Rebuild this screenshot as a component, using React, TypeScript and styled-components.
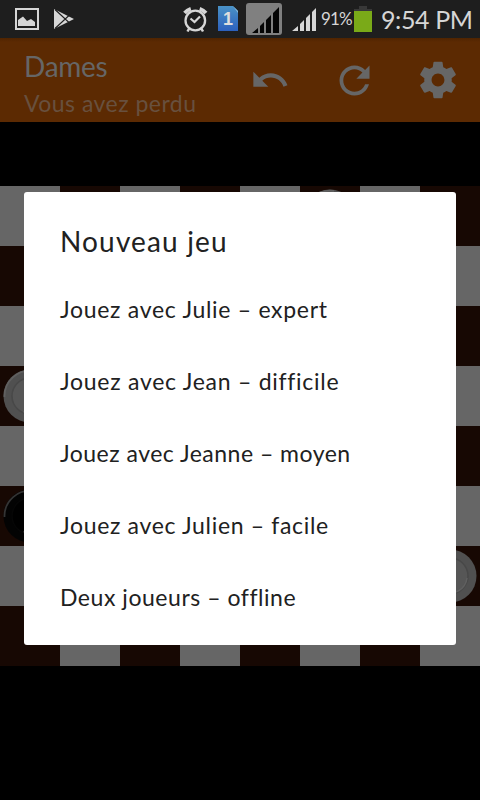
import React from "react";
import styled, { createGlobalStyle } from "styled-components";

const GlobalStyle = createGlobalStyle`
  * { box-sizing: border-box; }
  body { margin: 0; background: #000; font-family: Lato, "Open Sans", sans-serif; }
  h1, h2, p, ul { margin: 0; padding: 0; font-weight: 400; }
`;

const Screen = styled.div`
  position: relative;
  width: 480px;
  height: 800px;
  overflow: hidden;
  display: flex;
  flex-direction: column;
  background: #000;
`;

const StatusBar = styled.header`
  height: 38px;
  flex: none;
  display: flex;
  background: #1e1e1e;
  color: #d6d6d6;
  svg { display: block; flex: none; }
`;

const Spacer = styled.div`flex: 1;`;

const Label = styled.span<{ $size: number; $track: number; $width: number; $line: number }>`
  display: block;
  flex: none;
  white-space: nowrap;
  width: ${(p) => p.$width}px;
  font-size: ${(p) => p.$size}px;
  line-height: ${(p) => p.$line}px;
  letter-spacing: ${(p) => p.$track}px;
`;

const Clock = styled(Label)`
  padding-left: 4px;
`;

const AppBar = styled.div`
  height: 84px;
  flex: none;
  display: flex;
  background: linear-gradient(#4f2400, #5c2a02 4px);
  color: #666;
`;

const Titles = styled.div`
  width: 250px;
  flex: none;
  padding: 10px 0 0 24px;
`;

const Subtitle = styled.div`
  color: #68503e;
  padding-top: 2px;
`;

const Actions = styled.div`
  display: grid;
  grid-template-columns: 81.5px 84.5px 44px;
  align-items: center;
  svg { display: block; fill: #666; }
`;

const Board = styled.div`
  margin-top: 64px;
  flex: none;
  display: grid;
  grid-template-columns: repeat(8, 60px);
  grid-auto-rows: 60px;
`;

const Square = styled.div<{ $dark: boolean }>`
  background: ${(p) => (p.$dark ? "#170803" : "#666")};
  padding: 3px;
`;

const Dialog = styled.section`
  position: absolute;
  left: 24px;
  top: 192px;
  width: 432px;
  height: 453px;
  padding: 29px 36px 0;
  background: #fff;
  border-radius: 3px;
  color: #212121;
`;

const Options = styled.ul`
  list-style: none;
  padding-top: 12px;
`;

const Option = styled.li`
  height: 72px;
  display: flex;
  align-items: center;
`;

const Piece = ({ black = false }: { black?: boolean }) => (
  <svg width="54" height="54" viewBox="0 0 54 54">
    <circle cx="27" cy="27" r="26.5" fill={black ? "#030303" : "#505050"} />
    <path d="M1.5 28A25.5 25.5 0 0 1 31 2" fill="none" stroke={black ? "#343434" : "#606060"} strokeWidth="1.8" />
    <circle cx="27" cy="27" r="18" fill={black ? "#000" : "#565656"} stroke={black ? "#060606" : "#484848"} strokeWidth="1.5" />
    <path d="M44 29A17 17 0 0 1 20 42.5" fill="none" stroke={black ? "#222" : "#606060"} strokeWidth="1.5" />
  </svg>
);

const pieces: Record<string, "white" | "black"> = {
  "0-5": "white",
  "3-0": "white",
  "5-0": "black",
  "6-7": "white",
};

const options = [
  { text: "Jouez avec Julie – expert", width: 268, track: 0.7 },
  { text: "Jouez avec Jean – difficile", width: 279, track: 0.73 },
  { text: "Jouez avec Jeanne – moyen", width: 290, track: 0.48 },
  { text: "Jouez avec Julien – facile", width: 269, track: 0.67 },
  { text: "Deux joueurs – offline", width: 236, track: 0.54 },
];

const NotificationIcons = () => (
  <svg width="80" height="38" viewBox="0 0 80 38">
    <path d="M16 9H38V29H16Z" fill="none" stroke="#d6d6d6" strokeWidth="2" />
    <path d="M18 26V20L23 16.5L27 21L31 19L35 22V26Z" fill="#d6d6d6" />
    <path d="M54 9L67 19L54 29Z" fill="#d6d6d6" />
    <path d="M54 9L67 15.5L74 19L67 22.5L54 29L66 19Z" fill="#d6d6d6" />
    <path d="M55 9.5L69.5 23M55 28.5L69.5 15" stroke="#1e1e1e" strokeWidth="1.1" />
  </svg>
);

const AlarmIcon = () => (
  <svg width="29" height="38" viewBox="182 0 29 38">
    <g fill="none" stroke="#d6d6d6">
      <circle cx="195.3" cy="20.5" r="9.8" strokeWidth="2.3" />
      <path d="M190.5 18.5L194.5 22L200 16.5" strokeWidth="2.2" />
      <path d="M184.6 13Q187 10 190.8 8.8M199.7 8.8Q203.5 10 206 13" strokeWidth="3.7" />
      <path d="M189.5 28L187.5 31.5M201 28L203 31.5" strokeWidth="2.5" />
    </g>
  </svg>
);

const SimIcon = () => (
  <svg width="32" height="38" viewBox="211 0 32 38">
    <defs>
      <linearGradient id="sim" x1="0" y1="0" x2="0" y2="1">
        <stop offset="0" stopColor="#4a92c6" />
        <stop offset="1" stopColor="#2c60bd" />
      </linearGradient>
    </defs>
    <path d="M218 6H233L238 11V31H218Z" fill="url(#sim)" />
    <path d="M233 6L238 11V13Z" fill="#8bbddd" />
    <text x="228" y="25" textAnchor="middle" fontFamily="Liberation Sans" fontWeight="700" fontSize="18" fill="#dedede">1</text>
  </svg>
);

const SignalIcons = () => (
  <svg width="78" height="38" viewBox="243 0 78 38">
    <rect x="246" y="3" width="36" height="32" rx="3" fill="#808080" />
    <path d="M252 33L258 28V33ZM260 33V26L264 22V33ZM266 33V20L271 15V33ZM273 33V13L279 7V33Z" fill="#050505" />
    <path d="M292 31L298 26V31ZM300 31V24L304 20V31ZM306 31V18L310 14V31ZM312 31V12L316 8V31Z" fill="#d6d6d6" />
  </svg>
);

const BatteryIcon = () => (
  <svg width="26" height="38" viewBox="351 0 26 38">
    <path d="M359 6H367V9H372V12H354V9H359Z" fill="#383838" />
    <rect x="354" y="11" width="18" height="21" fill="#7aaa18" />
  </svg>
);

export default function App() {
  return (
    <>
      <GlobalStyle />
      <Screen>
        <StatusBar>
          <NotificationIcons />
          <Spacer />
          <AlarmIcon />
          <SimIcon />
          <SignalIcons />
          <Label $size={17} $track={-0.9} $width={30} $line={37}>91%</Label>
          <BatteryIcon />
          <Clock as="time" $size={25} $track={-0.4} $width={103} $line={38}>9:54 PM</Clock>
        </StatusBar>
        <AppBar>
          <Titles>
            <Label as="h1" $size={28} $track={-0.3} $width={90} $line={36}>Dames</Label>
            <Subtitle>
              <Label as="p" $size={23} $track={0.47} $width={190} $line={34}>Vous avez perdu</Label>
            </Subtitle>
          </Titles>
          <Actions>
            <svg width="40" height="40" viewBox="0 0 24 24"><path d="M12.5 8c-2.65 0-5.05.99-6.9 2.6L2 7v9h9l-3.62-3.62c1.39-1.16 3.16-1.88 5.12-1.88 3.54 0 6.55 2.31 7.6 5.5l2.37-.78C21.08 11.03 17.15 8 12.5 8z" /></svg>
            <svg width="45" height="45" viewBox="0 0 24 24"><path d="M17.65 6.35C16.2 4.9 14.21 4 12 4c-4.42 0-7.99 3.58-7.99 8s3.57 8 7.99 8c3.73 0 6.84-2.55 7.73-6h-2.08c-.82 2.33-3.04 4-5.65 4-3.31 0-6-2.69-6-6s2.69-6 6-6c1.66 0 3.14.69 4.22 1.78L13 11h7V4l-2.35 2.35z" /></svg>
            <svg width="44" height="44" viewBox="0 0 24 24"><path d="M19.43 12.98c.04-.32.07-.64.07-.98s-.03-.66-.07-.98l2.11-1.65c.19-.15.24-.42.12-.64l-2-3.46c-.12-.22-.39-.3-.61-.22l-2.49 1c-.52-.4-1.08-.73-1.69-.98l-.38-2.65C14.46 2.18 14.25 2 14 2h-4c-.25 0-.46.18-.49.42l-.38 2.65c-.61.25-1.17.59-1.69.98l-2.49-1c-.23-.09-.49 0-.61.22l-2 3.46c-.13.22-.07.49.12.64l2.11 1.65c-.04.32-.07.65-.07.98s.03.66.07.98l-2.11 1.65c-.19.15-.24.42-.12.64l2 3.46c.12.22.39.3.61.22l2.49-1c.52.4 1.08.73 1.69.98l.38 2.65c.03.24.24.42.49.42h4c.25 0 .46-.18.49-.42l.38-2.65c.61-.25 1.17-.59 1.69-.98l2.49 1c.23.09.49 0 .61-.22l2-3.46c.12-.22.07-.49-.12-.64l-2.11-1.65zM12 15.5c-1.93 0-3.5-1.57-3.5-3.5s1.57-3.5 3.5-3.5 3.5 1.57 3.5 3.5-1.57 3.5-3.5 3.5z" /></svg>
          </Actions>
        </AppBar>
        <Board>
          {Array.from({ length: 64 }, (_, i) => {
            const row = Math.floor(i / 8);
            const col = i % 8;
            const piece = pieces[`${row}-${col}`];
            return (
              <Square key={i} $dark={(row + col) % 2 === 1}>
                {piece && <Piece black={piece === "black"} />}
              </Square>
            );
          })}
        </Board>
        <Dialog role="dialog">
          <Label as="h2" $size={28} $track={1.15} $width={180} $line={40}>Nouveau jeu</Label>
          <Options>
            {options.map((o) => (
              <Option key={o.text}>
                <Label $size={23} $track={o.track} $width={o.width} $line={32}>{o.text}</Label>
              </Option>
            ))}
          </Options>
        </Dialog>
      </Screen>
    </>
  );
}
